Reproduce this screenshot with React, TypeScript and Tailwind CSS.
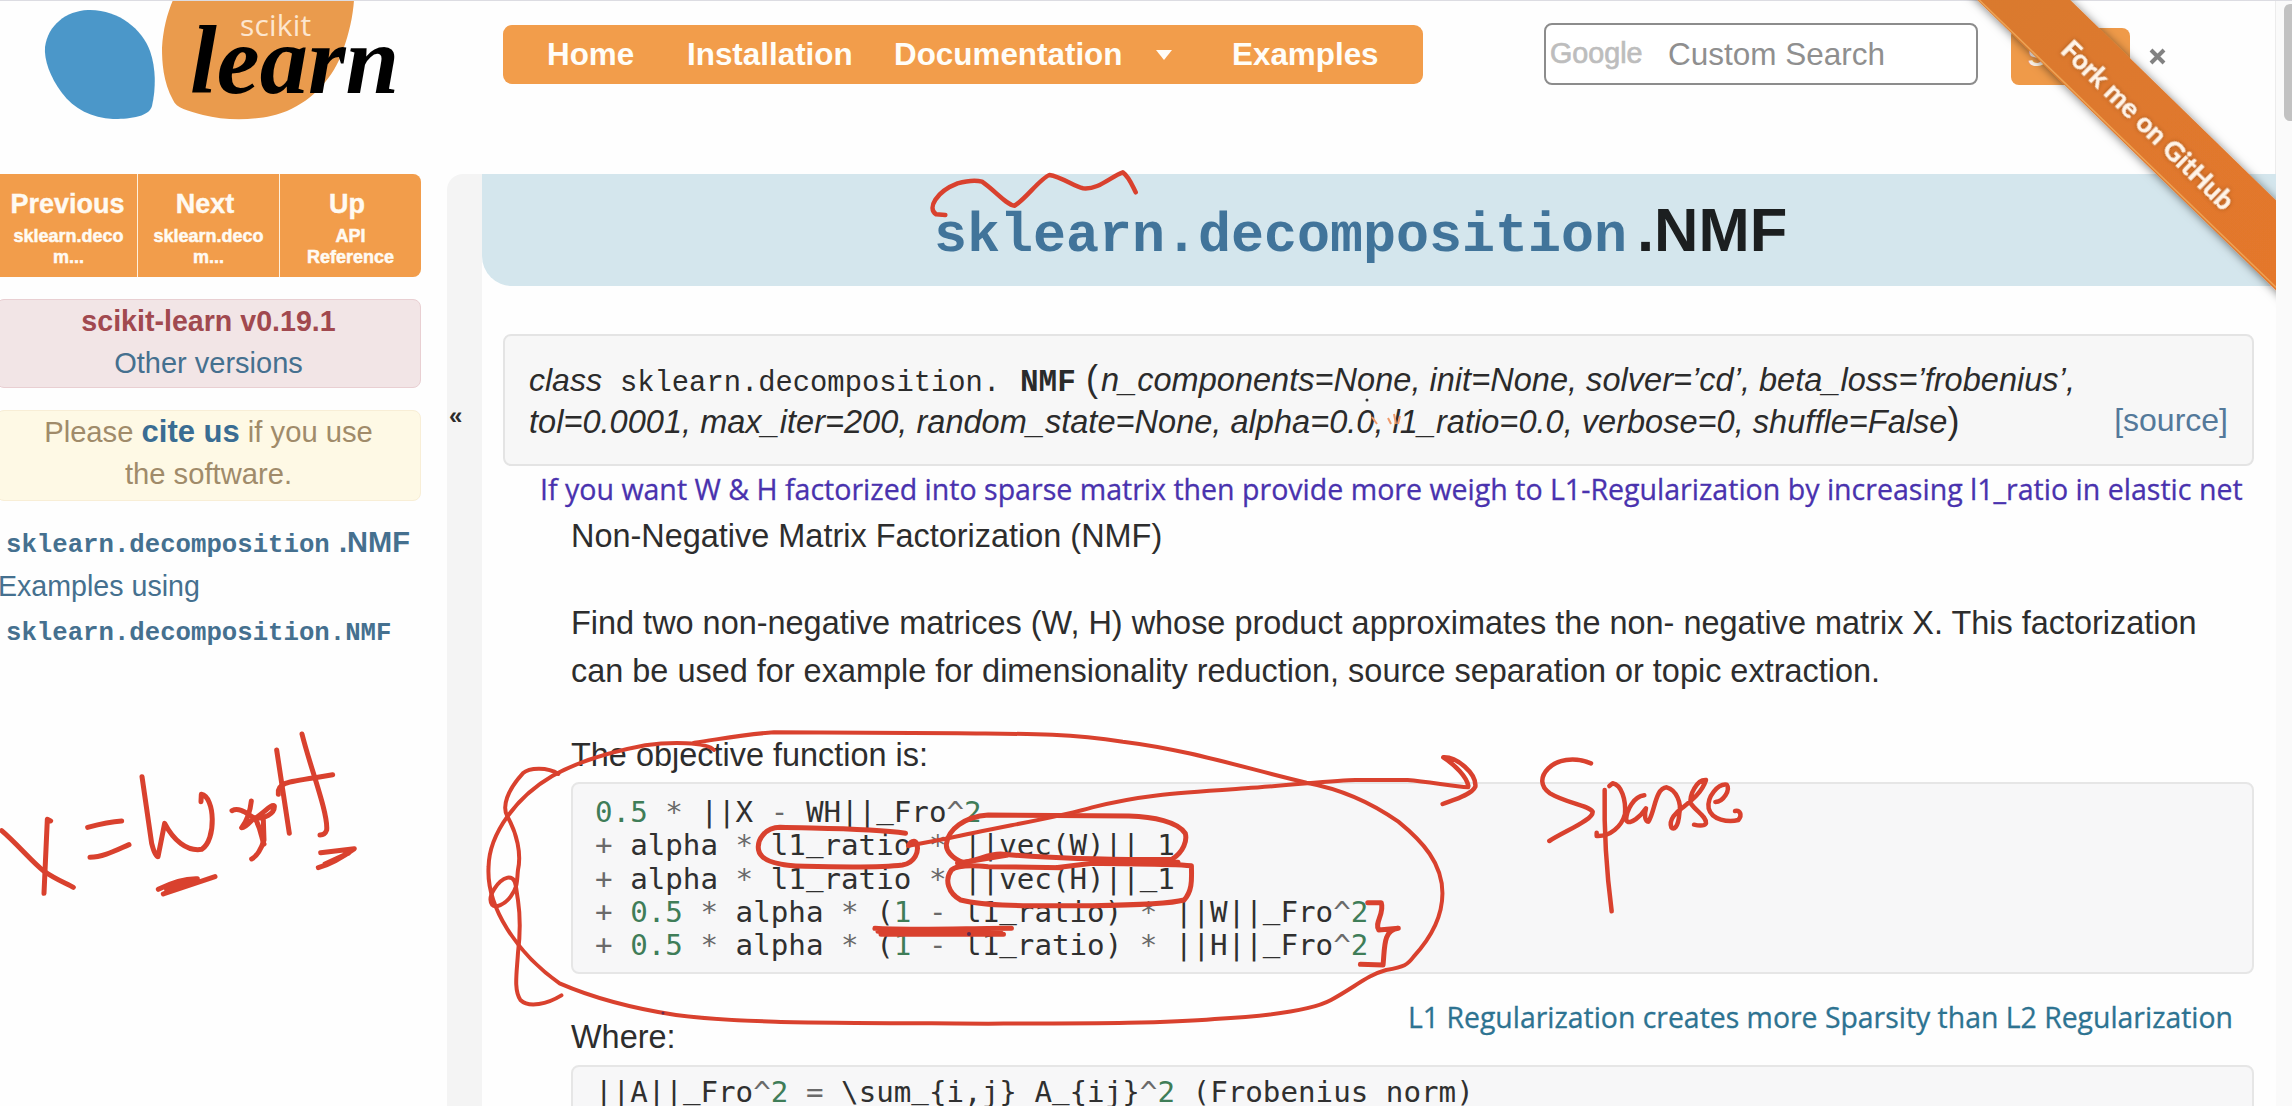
import React from "react";

const INK = "#d9412e";

function Logo() {
  return (
    <div className="relative h-[122px] w-[420px] shrink-0">
      <svg className="absolute inset-0" width="420" height="122" viewBox="0 0 420 122">
        <path
          d="M88 10 C118 9 142 29 150 51 C156 68 156 88 152 106 C149 118 125 119 113 119 C92 118 74 109 62 93 C50 77 44 60 45 47 C48 25 66 11 88 10 Z"
          fill="#4b97c9"
        />
        <path
          d="M173 0 L354 0 C353 16 349 34 343 50 C334 77 313 100 287 111 C266 120 230 122 203 115 C188 111 176 108 173 100 C163 82 162 62 162 48 C163 30 167 14 173 0 Z"
          fill="#ea9b4d"
        />
      </svg>
      <span className="absolute left-[240px] top-[7px] font-['Open_Sans',sans-serif] text-[30px] leading-[36px] tracking-[0.2px] text-[#fde6cf]">
        scikit
      </span>
      <span className="absolute left-[190px] top-0 font-['Liberation_Serif',serif] text-[96.5px] font-bold italic leading-[122px] text-black">
        learn
      </span>
    </div>
  );
}

function Header() {
  return (
    <header className="flex h-[174px] items-start">
      <Logo />
      <nav className="ml-[83px] mt-[25px] flex h-[59px] w-[920px] items-center rounded-[9px] bg-[#f29d4b] pl-[44px] text-[31.4px] font-bold text-[#fffdf8]">
        <a className="w-[140px]">Home</a>
        <a className="w-[207px]">Installation</a>
        <a className="flex w-[338px] items-center">
          Documentation
          <span className="ml-[34px] mt-[2px] border-x-[8px] border-t-[10px] border-x-transparent border-t-[#fffdf8]" />
        </a>
        <a>Examples</a>
      </nav>
      <div className="ml-[121px] mt-[23px] flex h-[62px] w-[434px] items-center rounded-[8px] border-2 border-[#8c8c8c] bg-white">
        <span className="ml-[4px] w-[118px] text-[28.7px] text-[#bdbdbd] [-webkit-text-stroke:0.7px_#bdbdbd]">Google</span>
        <span className="pt-[2px] text-[31.5px] text-[#8f8f8f]">Custom Search</span>
      </div>
      <div className="ml-[33px] mt-[28px] flex h-[57px] w-[119px] items-center overflow-hidden rounded-[8px] bg-[#ef9a49] pl-[17px] pt-[2px] text-[27px] font-bold text-[#fff6ea]">
        Search
      </div>
      <svg className="ml-[19px] mt-[48px]" width="18" height="17" viewBox="0 0 18 17">
        <path d="M2 2 L15 15 M15 2 L2 15" stroke="#828282" strokeWidth="4" />
      </svg>
    </header>
  );
}

const rellinks = [
  { title: "Previous", a: "sklearn.deco", b: "m...", w: "w-[137px]", shift: "pr-[2px]" },
  { title: "Next", a: "sklearn.deco", b: "m...", w: "w-[141px]", shift: "pr-[7px]" },
  { title: "Up", a: "API", b: "Reference", w: "w-[141px]", shift: "pr-[7px]" },
];

function Sidebar() {
  return (
    <aside className="w-[447px] shrink-0 text-[28.6px] text-[#45708f]">
      <div className="flex h-[103px] w-[421px] gap-px overflow-hidden rounded-r-[8px] bg-[#fff0dc]">
        {rellinks.map((r) => (
          <div key={r.title} className={`${r.w} bg-[#f29d4b] pt-[12px] text-center font-bold text-[#fffaf2]`}>
            <div className={`text-[27px] leading-[36px] [-webkit-text-stroke:0.4px_#fffaf2] ${r.shift}`}>{r.title}</div>
            <div className="text-[18px] leading-[21px] [-webkit-text-stroke:0.5px_#fffaf2]">
              <div className="mt-[4px]">{r.a}</div>
              <div>{r.b}</div>
            </div>
          </div>
        ))}
      </div>
      <div className="-ml-[4px] mt-[22px] h-[89px] w-[425px] rounded-[8px] border border-[#e9cfd2] bg-[#f2e5e6] text-center leading-[42px]">
        <div className="font-bold text-[#a1494f]">scikit-learn v0.19.1</div>
        <div className="text-[29px]">Other versions</div>
      </div>
      <div className="-ml-[4px] mt-[22px] h-[91px] w-[425px] rounded-[8px] border border-[#f8eed6] bg-[#fef9e5] text-center text-[29.2px] leading-[42px] text-[#a08b6a]">
        <div>
          Please <b className="text-[31px] text-[#3a6d93]">cite us</b> if you use
        </div>
        <div>the software.</div>
      </div>
      <div className="mt-[19px] whitespace-nowrap leading-[44px]">
        <div className="flex h-[44px] items-baseline pl-[6px] font-bold">
          <code className="w-[333px] font-['Liberation_Mono',monospace] text-[25.7px]">sklearn.decomposition</code>
          <span className="text-[29px]">.NMF</span>
        </div>
        <div className="-ml-[2px] h-[44px]">Examples using</div>
        <div className="h-[44px] pl-[6px] font-bold">
          <code className="font-['Liberation_Mono',monospace] text-[25.7px]">sklearn.decomposition.NMF</code>
        </div>
      </div>
    </aside>
  );
}

function Num({ children }: { children: React.ReactNode }) {
  return <span className="text-[#3f7d58]">{children}</span>;
}
function Op({ children }: { children: React.ReactNode }) {
  return <span className="text-[#6a6a6a]">{children}</span>;
}
// Underscore sitting just under the baseline.
function U() {
  return <span className="align-[4px] leading-[16px]">_</span>;
}

function Signature() {
  return (
    <div className="flex h-[132px] w-[1751px] justify-between whitespace-nowrap rounded-[8px] border-2 border-[#e4e4e4] bg-[#f7f7f7] pl-[24px] pr-[24px] pt-[22px] text-[32px] leading-[42px] text-[#2b2b2b]">
      <div className="italic">
        <div className="flex h-[42px] items-baseline">
          <span className="w-[91px]">class</span>
          <code className="w-[400px] font-['Liberation_Mono',monospace] text-[28.8px] not-italic">sklearn.decomposition.</code>
          <b className="w-[66px] font-['Liberation_Mono',monospace] text-[31px] not-italic">NMF</b>
          <span className="w-[15px] text-[36px] not-italic">(</span>
          <span className="text-[32.5px] tracking-[0.03px]">n_components=None, init=None, solver=’cd’, beta_loss=’frobenius’,</span>
        </div>
        <div className="flex h-[42px] items-baseline">
          <span className="text-[32.5px] tracking-[0.03px]">
            tol=0.0001, max_iter=200, random_state=None, alpha=0.0, l1_ratio=0.0, verbose=0, shuffle=False
          </span>
          <span className="text-[36px] not-italic">)</span>
        </div>
      </div>
      <a className="pt-[41px] text-[#54799a]">[source]</a>
    </div>
  );
}

function Main() {
  return (
    <main className="w-[1794px] shrink-0 overflow-hidden bg-[#fefefe] text-[#2d2d2d]">
      <h1 className="flex h-[112px] items-baseline whitespace-nowrap rounded-bl-[30px] bg-[#d4e6ed] pl-[452px] font-bold leading-[112px]">
        <code className="w-[703px] font-['Liberation_Mono',monospace] text-[55px] text-[#41749a]">sklearn.decomposition</code>
        <span className="text-[61.5px] text-[#1c1f20]">.NMF</span>
      </h1>
      <div className="pl-[21px] pt-[48px]">
        <Signature />
        <p className="h-[46px] whitespace-nowrap pl-[37px] font-['Comic_Sans_MS','Open_Sans',sans-serif] text-[28.55px] leading-[46px] text-[#4932ae] [-webkit-text-stroke:0.3px_#4932ae]">
          If you want W &amp; H factorized into sparse matrix then provide more weigh to L1-Regularization by increasing l1_ratio in elastic net
        </p>
        <div className="ml-[68px] w-[1683px] whitespace-nowrap text-[32.45px] leading-[48px]">
          <p>Non-Negative Matrix Factorization (NMF)</p>
          <p className="mt-[39px]">
            Find two non-negative matrices (W, H) whose product approximates the non- negative matrix X. This factorization
            <br />
            can be used for example for dimensionality reduction, source separation or topic extraction.
          </p>
          <p className="mt-[36px]">The objective function is:</p>
          <pre className="mt-[3px] h-[192px] rounded-[8px] border-2 border-[#e6e6e6] bg-[#f7f7f8] pl-[22px] pt-[12px] font-['DejaVu_Sans_Mono',monospace] text-[29.2px] leading-[33.3px] text-[#303030]">
            <Num>0.5</Num> <Op>*</Op> ||X <Op>-</Op> WH||<U />Fro<Op>^</Op><Num>2</Num>{"\n"}
            <Op>+</Op> alpha <Op>*</Op> l1<U />ratio <Op>*</Op> ||vec(W)||<U />1{"\n"}
            <Op>+</Op> alpha <Op>*</Op> l1<U />ratio <Op>*</Op> ||vec(H)||<U />1{"\n"}
            <Op>+</Op> <Num>0.5</Num> <Op>*</Op> alpha <Op>*</Op> (<Num>1</Num> <Op>-</Op> l1<U />ratio) <Op>*</Op> ||W||<U />Fro<Op>^</Op><Num>2</Num>{"\n"}
            <Op>+</Op> <Num>0.5</Num> <Op>*</Op> alpha <Op>*</Op> (<Num>1</Num> <Op>-</Op> l1<U />ratio) <Op>*</Op> ||H||<U />Fro<Op>^</Op><Num>2</Num>
          </pre>
          <div className="mt-[19px] flex h-[72px] items-start justify-between">
            <p className="mt-[20px]">Where:</p>
            <p className="pr-[21px] font-['Comic_Sans_MS','Open_Sans',sans-serif] text-[28.4px] text-[#2d7391] [-webkit-text-stroke:0.3px_#2d7391]">
              L1 Regularization creates more Sparsity than L2 Regularization
            </p>
          </div>
          <pre className="h-[100px] rounded-[8px] border-2 border-[#e6e6e6] bg-[#f7f7f8] pl-[22px] pt-[9px] font-['DejaVu_Sans_Mono',monospace] text-[29.2px] leading-[33.3px] text-[#303030]">
            ||A||<U />Fro<Op>^</Op><Num>2</Num> <Op>=</Op> \sum<U />{"{i,j}"} A<U />{"{ij}"}<Op>^</Op><Num>2</Num> (Frobenius norm)
          </pre>
        </div>
      </div>
    </main>
  );
}

function Ribbon() {
  return (
    <div className="absolute left-[1950px] top-0 h-[310px] w-[326px] overflow-hidden">
      <svg width="326" height="310" viewBox="0 0 326 310">
        <defs>
          <linearGradient id="rib" x1="0" y1="0" x2="1" y2="1">
            <stop offset="0" stopColor="#d97a2e" />
            <stop offset="1" stopColor="#e5772c" />
          </linearGradient>
          <filter id="sh" x="-20%" y="-20%" width="140%" height="140%">
            <feDropShadow dx="0" dy="1" stdDeviation="5" floodColor="#000" floodOpacity="0.5" />
          </filter>
          <filter id="ts" x="-20%" y="-20%" width="140%" height="140%">
            <feDropShadow dx="0" dy="0" stdDeviation="2" floodColor="#7a3a08" floodOpacity="0.6" />
          </filter>
        </defs>
        <path d="M17 -10 L110 -10 L340 214 L340 304 Z" fill="url(#rib)" filter="url(#sh)" />
        <path d="M22 -7 L336 297" stroke="#eda355" strokeWidth="1.5" />
        <text
          x="0"
          y="0"
          transform="translate(199 124) rotate(44.4)"
          textAnchor="middle"
          dominantBaseline="central"
          fontFamily="Lato"
          fontWeight="700"
          fontSize="27"
          fill="#fff4e8"
          stroke="#fff4e8"
          strokeWidth="0.4"
          filter="url(#ts)"
        >
          Fork me on GitHub
        </text>
      </svg>
    </div>
  );
}

// Pen annotations laid over the page. Each group has its own local coordinate scale.
const strokes: { t: string; w: number; d: string[] }[] = [
  {
    t: "translate(480 0) scale(0.61224 0.33333)",
    w: 4.5,
    d: [
      "M760 645 L745 643 C730 625 745 575 780 550 C800 540 810 540 820 545 C840 570 860 615 873 617 C890 600 915 535 930 525 C950 530 970 560 985 565 C1010 570 1030 530 1050 517 C1060 530 1065 555 1071 577",
    ],
  },
  {
    t: "translate(480 700) scale(0.61224 0.33333)",
    w: 4,
    d: [
      "M382 150 C370 125 310 125 270 136 C200 160 150 195 118 228 C60 290 15 400 14 500 C10 620 60 760 130 850 C180 890 250 925 320 945 C420 970 560 968 830 971 C1000 970 1120 970 1200 957 C1320 945 1370 920 1390 900 C1430 860 1450 825 1480 810 C1510 800 1515 795 1525 770 C1560 700 1572 640 1572 580 C1572 490 1540 425 1500 365 C1450 300 1400 265 1350 248 C1250 205 1160 150 1050 125 C950 98 880 102 780 100 L480 97 C430 103 390 118 350 128",
      "M128 222 C110 200 80 203 70 220 C45 270 35 320 45 350 C60 400 68 460 62 510 C60 545 62 560 50 590 C40 615 25 625 20 615 C10 590 30 540 45 533 C60 530 58 560 62 600 C66 650 66 700 62 760 C60 820 55 870 66 900 C80 925 110 912 133 886",
      "M700 437 L765 415 C850 380 950 350 1000 322 C1080 285 1130 280 1250 265 C1330 255 1400 240 1430 240 L1515 240 C1550 245 1590 260 1614 262",
    ],
  },
  {
    t: "translate(480 700) scale(0.61224 0.33333)",
    w: 5,
    d: [
      "M695 400 C640 385 560 386 490 382 C465 383 452 420 455 450 C458 480 480 497 530 499 C600 502 670 500 690 495 C710 488 718 455 713 430 C710 418 702 425 700 437",
      "M762 430 C760 450 770 475 790 488 C815 480 830 462 850 462 C900 470 1000 480 1130 478 C1150 455 1155 420 1152 400 C1140 365 1100 350 1060 348 L830 345 C790 350 765 390 762 430",
      "M780 490 L860 466",
      "M950 503 L830 500 C800 495 780 495 770 510 C758 540 765 580 785 600 C830 620 900 618 1000 617 C1080 615 1130 610 1150 600 C1165 570 1162 530 1162 497 C1120 490 1080 493 1000 490 L940 503",
      "M1000 480 L1140 487",
      "M645 685 C700 692 800 685 868 685 M655 703 L855 703 M650 694 L850 694",
      "M1450 608 L1472 608 C1478 640 1460 670 1468 690 L1500 685 C1475 690 1478 740 1475 795 L1438 793",
    ],
  },
  {
    t: "translate(0 700) scale(0.33333 0.33333)",
    w: 5,
    d: [
      "M5 392 C50 430 100 490 130 512 C170 540 200 550 220 562",
      "M152 363 L142 358 L132 580",
      "M263 382 C300 372 330 365 365 363",
      "M270 472 C310 472 350 450 387 434",
      "M426 230 L455 430 Q465 470 474 470 L494 370 C520 420 560 455 605 448 C650 420 645 290 604 283 L603 305",
      "M696 332 C720 320 745 345 765 355 C790 340 815 310 823 318 C825 340 790 360 770 352",
      "M754 303 C750 340 735 370 725 383 C740 385 760 350 765 355 C785 390 785 420 792 432",
      "M790 360 L792 420 C785 445 770 470 755 477",
      "M830 150 L868 400",
      "M906 102 C930 200 985 340 980 390 Q975 405 960 405",
      "M835 283 C830 250 860 245 945 233 L998 224",
      "M475 568 C520 545 560 535 592 536 L490 582 L645 530 M500 570 L580 545",
      "M962 458 L1063 446 C1030 470 1000 490 955 503 M975 492 L1045 460",
    ],
  },
  {
    t: "translate(1400 740) scale(0.33333 0.33333)",
    w: 4.5,
    d: [
      "M205 138 C200 110 165 75 130 52 C170 50 230 100 226 140 C215 165 160 180 128 192",
      "M573 70 C520 48 470 60 445 85 C420 110 420 140 450 160 C500 190 565 195 578 215 C580 240 500 270 448 303",
      "M614 150 C612 260 620 400 635 514",
      "M590 278 L590 288 C630 290 665 260 675 222 C678 180 665 135 638 130 L628 138",
      "M733 166 C700 170 680 210 678 240 C690 260 725 225 738 205 C732 225 735 245 745 245 C765 215 765 145 800 142 C830 150 845 190 838 220 C835 265 820 270 814 262 C805 240 830 215 845 205 C870 185 905 160 918 120 C890 118 868 165 872 190 C890 215 920 230 918 250 C912 260 895 257 882 254",
      "M946 186 C970 185 992 150 980 134 C955 130 920 170 926 205 C935 240 985 248 1015 240 C1028 225 1020 210 1005 213",
    ],
  },
];

function Ink() {
  return (
    <svg className="pointer-events-none absolute inset-0" width="2292" height="1106" viewBox="0 0 2292 1106" fill="none">
      {strokes.map((g, i) => (
        <g key={i} transform={g.t} stroke={INK} strokeWidth={g.w} strokeLinecap="round" strokeLinejoin="round">
          {g.d.map((d) => (
            <path key={d} d={d} vectorEffect="non-scaling-stroke" />
          ))}
        </g>
      ))}
      <circle cx="969" cy="934" r="2" fill="#5a2a50" />
      <circle cx="663" cy="1013" r="1.5" fill="#6a2a50" />
      <circle cx="1367" cy="400" r="1.5" fill="#333" />
      <path d="M1372 417 L1377 424 M1388 418 l3 6 M1394 414 l2 10 M1400 416 l-2 8" stroke="#ef9a6a" strokeWidth="2" />
    </svg>
  );
}

export default function App() {
  return (
    <div className="relative flex h-[1106px] w-[2292px] overflow-hidden bg-[#fefefe] font-['Liberation_Sans',Arial,sans-serif]">
      <div className="w-[2276px] shrink-0 border-r border-[#ececec]">
        <Header />
        <div className="flex h-[932px]">
          <Sidebar />
          <div className="flex w-[35px] shrink-0 items-start rounded-tl-[16px] bg-[#f4f4f4] pl-[2px] pt-[224px] text-[24px] font-bold leading-[36px] text-[#2c2c2c]">
            «
          </div>
          <Main />
        </div>
      </div>
      <div className="flex w-[16px] justify-end bg-[#fafafa] pt-[4px]">
        <div className="h-[117px] w-[8px] rounded-l-[6px] bg-[#c2c2c2]" />
      </div>
      <div className="absolute inset-x-0 top-0 h-px bg-[#dcdce2]" />
      <Ribbon />
      <Ink />
    </div>
  );
}
